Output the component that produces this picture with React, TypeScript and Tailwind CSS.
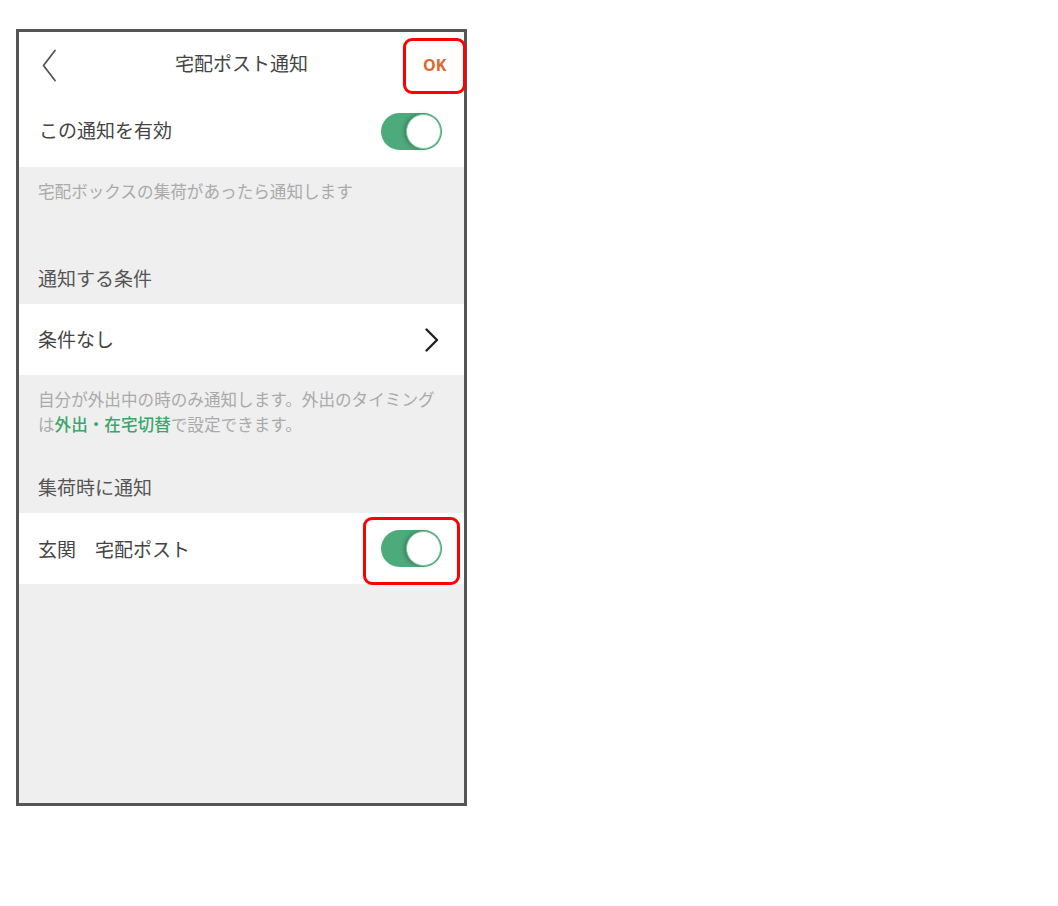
import React from "react";

const jp = { fontFamily: '"Noto Sans CJK JP", "Noto Sans", sans-serif' };

function Toggle() {
  return (
    <div className="relative w-[61px] h-[37px] rounded-full bg-[#4dab7b]">
      <div className="absolute right-[1px] top-[1px] w-[35px] h-[35px] rounded-full bg-white border border-[#7cc49d] shadow-[-2px_0_4px_rgba(0,0,0,0.25)]" />
    </div>
  );
}

export default function App() {
  return (
    <div className="w-[1058px] h-[906px] bg-white" style={jp}>
      <div className="relative ml-[16px] mt-[29px] w-[451px] h-[777px] border-[3px] border-[#555555] bg-[#efefef] flex flex-col">
        {/* Header */}
        <div className="relative h-[63px] bg-white flex items-center justify-center">
          <svg className="absolute left-[22px] top-[17px]" width="16" height="33" viewBox="0 0 16 33" fill="none">
            <path d="M14 1.5 L2.5 16.5 L14 31.5" stroke="#555" strokeWidth="1.8" strokeLinecap="round" strokeLinejoin="round" />
          </svg>
          <span className="text-[19px] leading-[26px] text-[#444] -translate-y-[1px]">宅配ポスト通知</span>
          <span
            className="absolute left-[404px] top-[22px] text-[16px] leading-[22px] font-bold text-[#e0662c]"
            style={{ fontFamily: '"Open Sans", sans-serif' }}
          >
            OK
          </span>
        </div>

        {/* Enable row */}
        <div className="h-[72px] bg-white flex items-center justify-between pl-[20px] pr-[22px]">
          <span className="text-[19px] leading-[26px] text-[#444] -translate-y-[1px]">この通知を有効</span>
          <Toggle />
        </div>

        <p className="pt-[12px] pl-[19px] text-[16.6px] leading-[25px] text-[#aaaaaa]">
          宅配ボックスの集荷があったら通知します
        </p>

        <div className="mt-[61px] pb-[13px] pl-[19px] text-[19px] leading-[26px] text-[#555]">通知する条件</div>

        <div className="h-[71px] bg-white flex items-center justify-between pl-[19px] pr-[24px]">
          <span className="text-[19px] leading-[26px] text-[#444] -translate-y-[1px]">条件なし</span>
          <svg width="16" height="24" viewBox="0 0 16 24" fill="none">
            <path d="M2.5 1.5 L13 12 L2.5 22.5" stroke="#222" strokeWidth="2.4" strokeLinecap="round" strokeLinejoin="round" />
          </svg>
        </div>

        <p className="pt-[12px] pl-[19px] text-[16.6px] leading-[25px] text-[#aaaaaa]">
          自分が外出中の時のみ通知します。外出のタイミング
          <br />
          は<span className="text-[#3aa66b] font-medium">外出・在宅切替</span>で設定できます。
        </p>

        <div className="mt-[37px] pb-[13px] pl-[19px] text-[19px] leading-[26px] text-[#555]">集荷時に通知</div>

        <div className="h-[71px] bg-white flex items-center justify-between pl-[19px] pr-[22px]">
          <span className="text-[19px] leading-[26px] text-[#444]">玄関　宅配ポスト</span>
          <Toggle />
        </div>

        {/* Annotation boxes */}
        <div className="absolute left-[384px] top-[6px] w-[63px] h-[56px] rounded-[9px] border-[3px] border-[#ff0000]" />
        <div className="absolute left-[344px] top-[485px] w-[97px] h-[68px] rounded-[9px] border-[3px] border-[#ff0000]" />
      </div>
    </div>
  );
}
